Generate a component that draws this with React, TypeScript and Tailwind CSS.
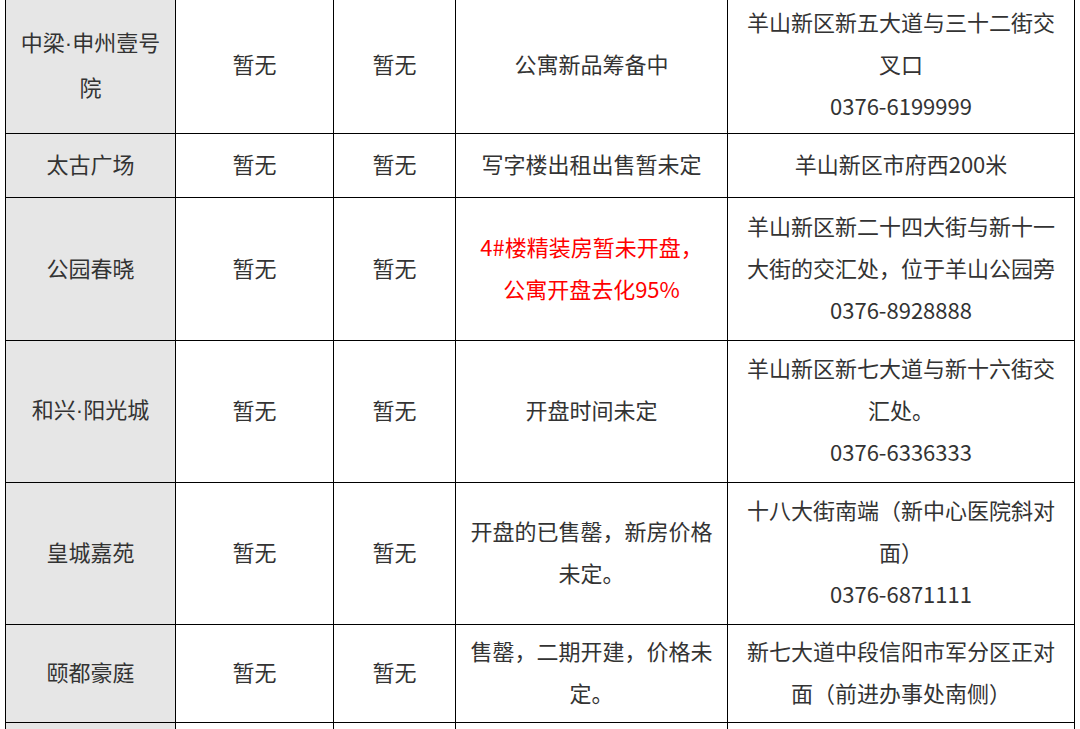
import React from "react";

type Row = {
  name: React.ReactNode;
  h: string;
  pb: string;
  status: React.ReactNode;
  red?: boolean;
  addr: React.ReactNode;
};

const Dot = () => <span style={{ fontFamily: '"Liberation Sans", sans-serif' }}>·</span>;

const ROWS: Row[] = [
  {
    name: (
      <>
        中梁<Dot />申州壹号
        <br />
        院
      </>
    ),
    h: "h-[133px]",
    pb: "pb-[6px]",
    status: "公寓新品筹备中",
    addr: (
      <>
        羊山新区新五大道与三十二街交
        <br />
        叉口
        <br />
        0376-6199999
      </>
    ),
  },
  {
    name: "太古广场",
    h: "h-[64px]",
    pb: "pb-[4px]",
    status: "写字楼出租出售暂未定",
    addr: "羊山新区市府西200米",
  },
  {
    name: "公园春晓",
    h: "h-[143px]",
    pb: "pb-[4px]",
    red: true,
    status: (
      <>
        4#楼精装房暂未开盘，
        <br />
        公寓开盘去化95%
      </>
    ),
    addr: (
      <>
        羊山新区新二十四大街与新十一
        <br />
        大街的交汇处，位于羊山公园旁
        <br />
        0376-8928888
      </>
    ),
  },
  {
    name: (
      <>
        和兴<Dot />阳光城
      </>
    ),
    h: "h-[142px]",
    pb: "pb-[4px]",
    status: "开盘时间未定",
    addr: (
      <>
        羊山新区新七大道与新十六街交
        <br />
        汇处。
        <br />
        0376-6336333
      </>
    ),
  },
  {
    name: "皇城嘉苑",
    h: "h-[142px]",
    pb: "pb-[4px]",
    status: (
      <>
        开盘的已售罄，新房价格
        <br />
        未定。
      </>
    ),
    addr: (
      <>
        十八大街南端（新中心医院斜对
        <br />
        面）
        <br />
        0376-6871111
      </>
    ),
  },
  {
    name: "颐都豪庭",
    h: "h-[98px]",
    pb: "pb-[4px]",
    status: (
      <>
        售罄，二期开建，价格未
        <br />
        定。
      </>
    ),
    addr: (
      <>
        新七大道中段信阳市军分区正对
        <br />
        面（前进办事处南侧）
      </>
    ),
  },
];

export default function App() {
  return (
    <div
      className="w-[1080px] h-[729px] overflow-hidden bg-white pl-[5px]"
      style={{ fontFamily: '"Noto Sans CJK SC", "Microsoft YaHei", sans-serif' }}
    >
      <table className="table-fixed border-collapse w-[1069px] text-[22px] leading-[42px] text-[#333333]">
        <colgroup>
          <col className="w-[170px]" />
          <col className="w-[158px]" />
          <col className="w-[122px]" />
          <col className="w-[272px]" />
          <col className="w-[347px]" />
        </colgroup>
        <tbody>
          {ROWS.map((r, i) => {
            const cell = `${r.pb} px-0 pt-0 border border-black ${i === 0 ? "border-t-0" : ""} text-center align-middle`;
            return (
              <tr key={i}>
                <td className={`${r.h} ${cell} bg-[#e6e6e6]`}>{r.name}</td>
                <td className={cell}>暂无</td>
                <td className={cell}>暂无</td>
                <td className={`${cell} ${r.red ? "text-[#ff0000]" : ""}`}>{r.status}</td>
                <td className={cell}>{r.addr}</td>
              </tr>
            );
          })}
          <tr>
            <td className="h-[60px] border border-black bg-[#e6e6e6] p-0" />
            <td className="border border-black p-0" />
            <td className="border border-black p-0" />
            <td className="border border-black p-0" />
            <td className="border border-black p-0" />
          </tr>
        </tbody>
      </table>
    </div>
  );
}
